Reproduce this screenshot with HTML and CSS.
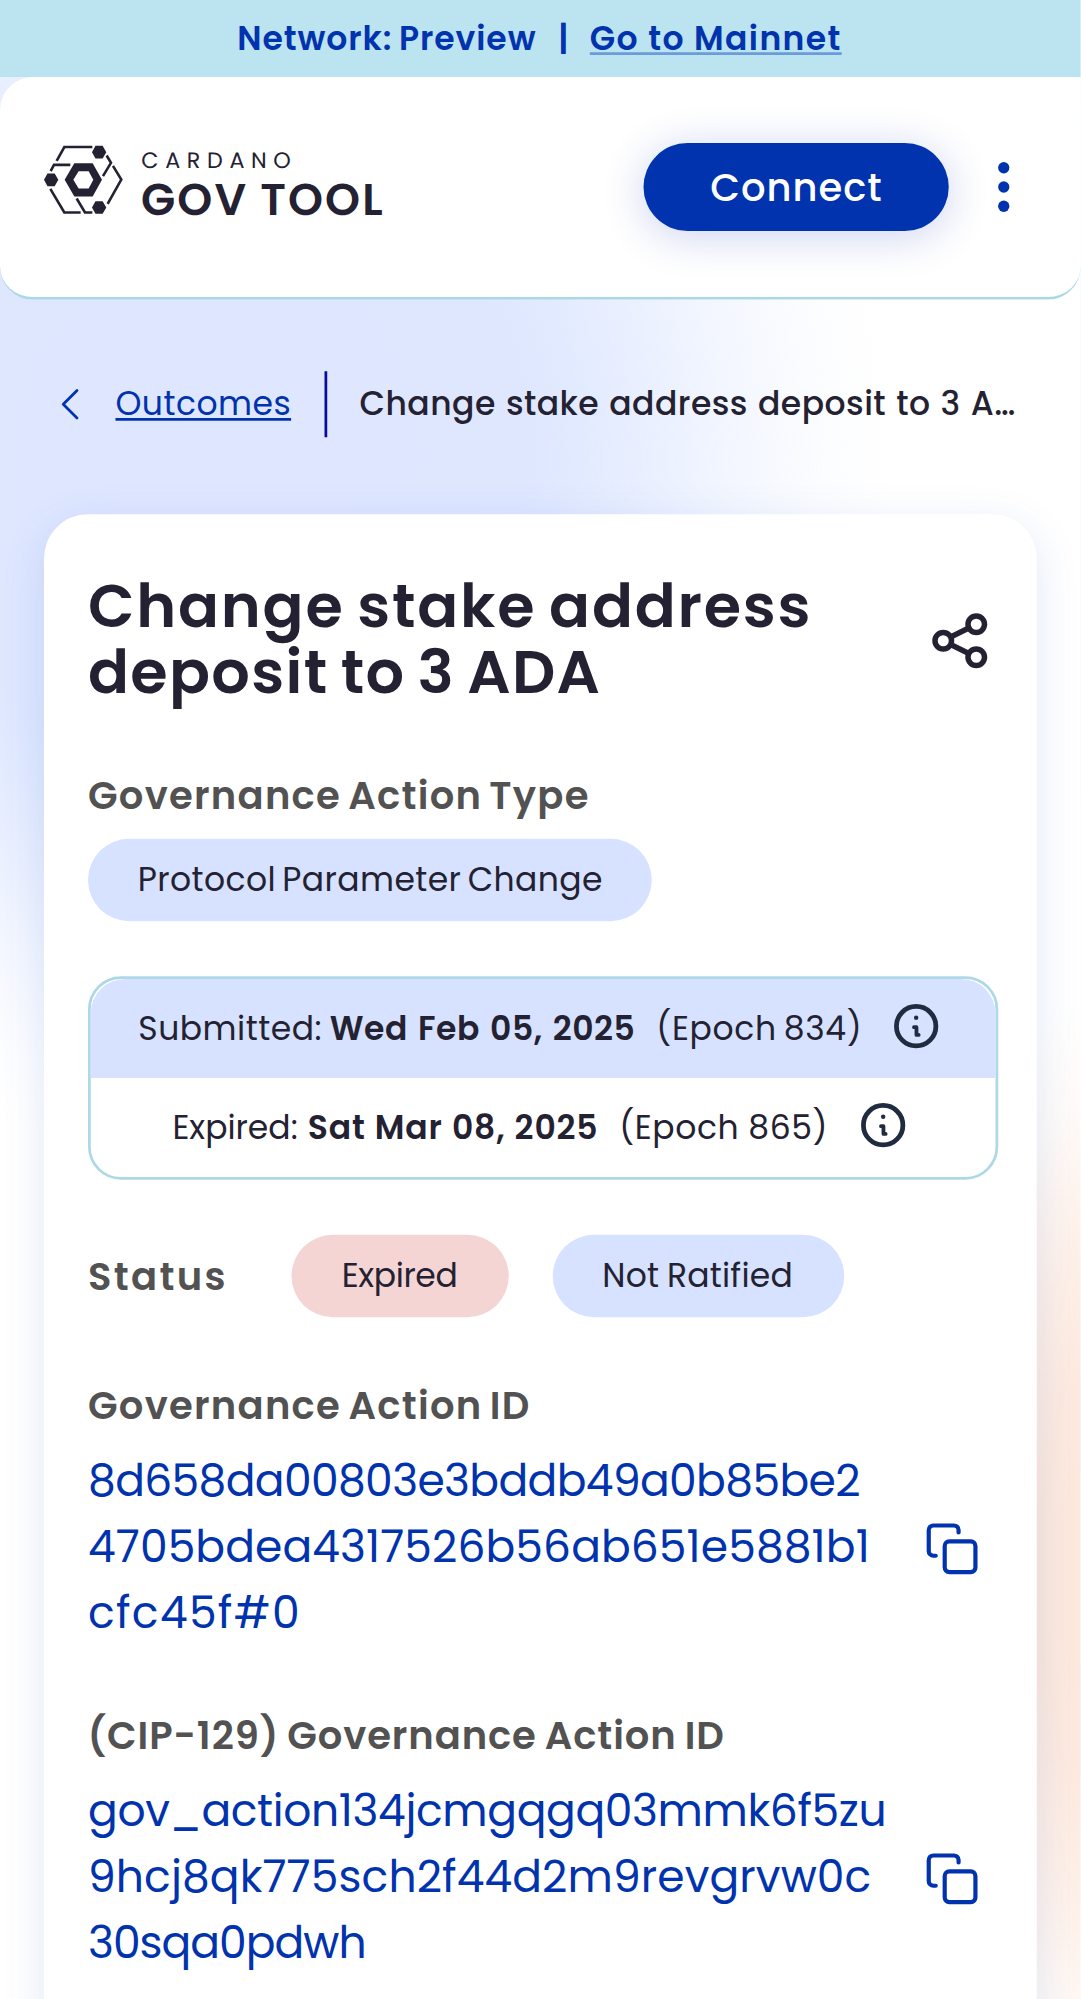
FILE: index.html
```
<!DOCTYPE html>
<html lang="en">
<head>
  <meta charset="utf-8">
  <title>Cardano GovTool</title>
  <link rel="stylesheet" href="styles.css">
</head>
<body>
<div class="page">
  <div class="banner">
    <span class="banner-network">Network: Preview</span>
    <span class="banner-sep">|</span>
    <a class="banner-link">Go to Mainnet</a>
  </div>

  <header class="header">
    <div class="logo">
      <svg class="logo-mark" viewBox="27 33 236 204" fill="none" stroke="#242232" stroke-width="7.800">
        <path d="M65 78 88 36.5H172M47 109 57 90H106M46 162 88 233H137M125 191 150 233H172M234 93 259 134 218 207M215 62 228 84 204 124"/>
        <g fill="#242232" stroke="none">
          <path d="M27 135 37.500 116H59L70 135 59 154H37.500ZM171 52 181.500 33H203L214 52 203 71H181.500ZM171 218 181.500 199H203L214 218 203 237H181.500Z"/>
          <path fill-rule="evenodd" d="M89 135 118 85H173L201 135 173 185H118ZM115 135 131 161H161L175 135 161 109H131Z"/>
        </g>
      </svg>
      <div class="logo-text">
        <span class="logo-small">CARDANO</span>
        <span class="logo-big">GOV TOOL</span>
      </div>
    </div>
    <div class="header-actions">
      <button class="connect">Connect</button>
      <svg class="menu" viewBox="0 0 24 24" fill="#0033ad">
        <circle cx="12" cy="5" r="2.050"/><circle cx="12" cy="12" r="2.050"/><circle cx="12" cy="19" r="2.050"/>
      </svg>
    </div>
  </header>

  <nav class="crumbs">
    <svg class="chevron" viewBox="0 0 7 12" fill="none" stroke="#0033ad" stroke-linecap="round" stroke-linejoin="round"><path d="M6 1 1 6 6 11"/></svg>
    <a class="crumb-link">Outcomes</a>
    <span class="crumb-rule"></span>
    <span class="crumb-title">Change stake address deposit to 3 A…</span>
  </nav>

  <main class="card">
    <div class="title-row">
      <h1 class="title"><span class="title-first">Change stake address</span> <span class="title-second">deposit to 3 ADA</span></h1>
      <svg class="share" viewBox="0 0 24 24" fill="none" stroke="#242232" stroke-width="2">
        <circle cx="18" cy="6" r="3"/><circle cx="6" cy="12" r="3"/><circle cx="18" cy="18" r="3"/>
        <path d="M8.700 10.650 15.300 7.350M8.700 13.350 15.300 16.650"/>
      </svg>
    </div>

    <h2 class="label label-type">Governance Action Type</h2>
    <div class="chip chip-type">Protocol Parameter Change</div>

    <section class="dates">
      <div class="date date-submitted">
        <span class="date-name">Submitted:</span><b>Wed Feb 05, 2025</b><span class="epoch">(Epoch 834)</span>
        <svg class="info" viewBox="0 0 45 45" fill="none" stroke="#1f2c40" stroke-linecap="round" stroke-linejoin="round">
          <circle cx="22.500" cy="22.500" r="19.800" stroke-width="4.800"/><path stroke-width="3.800" d="M20.300 23.500H22.800V31.300H25"/><circle cx="22.500" cy="14" r="2.200" fill="#1f2c40" stroke="none"/>
        </svg>
      </div>
      <div class="date date-expired">
        <span class="date-name">Expired:</span><b>Sat Mar 08, 2025</b><span class="epoch">(Epoch 865)</span>
        <svg class="info" viewBox="0 0 45 45" fill="none" stroke="#1f2c40" stroke-linecap="round" stroke-linejoin="round">
          <circle cx="22.500" cy="22.500" r="19.800" stroke-width="4.800"/><path stroke-width="3.800" d="M20.300 23.500H22.800V31.300H25"/><circle cx="22.500" cy="14" r="2.200" fill="#1f2c40" stroke="none"/>
        </svg>
      </div>
    </section>

    <div class="status-row">
      <h2 class="label label-status">Status</h2>
      <div class="chip chip-expired">Expired</div>
      <div class="chip chip-ratified">Not Ratified</div>
    </div>

    <h2 class="label label-id">Governance Action ID</h2>
    <div class="hash-row">
      <div class="hash">
        <span class="hash-a1">8d658da00803e3bddb49a0b85be2</span>
        <span class="hash-a2">4705bdea4317526b56ab651e5881b1</span>
        <span class="hash-a3">cfc45f#0</span>
      </div>
      <svg class="copy" viewBox="0 0 51 51" fill="none" stroke="#0033ad" stroke-width="4.200" stroke-linecap="round" stroke-linejoin="round">
        <rect x="18" y="18" width="30.800" height="30.800" rx="4.600"/><path d="M9 32.300H6.600A4.600 4.600 0 0 1 2 27.700V6.600A4.600 4.600 0 0 1 6.600 2H27.300A4.600 4.600 0 0 1 31.900 6.600V9"/>
      </svg>
    </div>

    <h2 class="label label-cip">(CIP-129) Governance Action ID</h2>
    <div class="hash-row">
      <div class="hash">
        <span class="hash-b1">gov_action134jcmgqgq03mmk6f5zu</span>
        <span class="hash-b2">9hcj8qk775sch2f44d2m9revgrvw0c</span>
        <span class="hash-b3">30sqa0pdwh</span>
      </div>
      <svg class="copy" viewBox="0 0 51 51" fill="none" stroke="#0033ad" stroke-width="4.200" stroke-linecap="round" stroke-linejoin="round">
        <rect x="18" y="18" width="30.800" height="30.800" rx="4.600"/><path d="M9 32.300H6.600A4.600 4.600 0 0 1 2 27.700V6.600A4.600 4.600 0 0 1 6.600 2H27.300A4.600 4.600 0 0 1 31.900 6.600V9"/>
      </svg>
    </div>
  </main>
</div>
</body>
</html>
```
FILE: styles.css
```
* { box-sizing: border-box; }

html, body { height: 100%; overflow: hidden; }

body {
  margin: 0;
  color: #242232;
  font: 400 12px/18px Poppins, Inter, sans-serif;
}

h1, h2 { margin: 0; }
span, a, b { white-space: nowrap; }
svg { flex: none; display: block; overflow: visible; }

/* phone layout, 393 wide, shown at 2.75x */
.page {
  display: flex;
  flex-direction: column;
  width: 393.1px;
  height: 727px;
  overflow: hidden;
  transform: scale(2.75);
  transform-origin: 0 0;
  background:
    radial-gradient(ellipse 124px 225px at 433px 573px, #fde6d9 0%, #fde9de 45%, rgba(254, 235, 224, 0.65) 66%, rgba(254, 236, 225, 0.22) 83%, rgba(255, 240, 232, 0) 100%),
    radial-gradient(ellipse 244px 252px at 80px 167px, #dfe6ff 0%, #dfe7ff 46%, rgba(223, 232, 255, 0.9) 54%, rgba(223, 232, 255, 0.68) 64%, rgba(223, 232, 255, 0.38) 76%, rgba(223, 232, 255, 0.1) 90%, rgba(223, 232, 255, 0) 100%),
    #fff;
}

/* network banner */
.banner {
  display: flex;
  align-items: center;
  flex: none;
  height: 28px;
  padding-left: 86.3px;
  background: #bbe3f0;
  color: #0033ad;
  font-weight: 600;
}
.banner-network { width: 109px; letter-spacing: 0.34px; word-spacing: -0.8px; }
.banner-sep { width: 19.2px; text-align: center; }
.banner-link {
  letter-spacing: 0.5px;
  text-decoration: underline #6c9bd9 1px;
  text-underline-offset: 1px;
  text-decoration-skip-ink: none;
}

/* header */
.header {
  display: flex;
  align-items: center;
  justify-content: space-between;
  flex: none;
  height: 81px;
  padding: 0 16px;
  border-bottom: 1px solid #a9d9e6;
  border-radius: 12px;
  background: #fff;
}
.logo { display: flex; gap: 6.8px; height: 30px; text-rendering: geometricPrecision; }
.logo-mark { width: 28.6px; height: 24.8px; }
.logo-text { display: flex; flex-direction: column; gap: 3px; padding-top: 0.7px; }
.logo-small { font-size: 8.1px; font-weight: 400; line-height: 8px; letter-spacing: 2.42px; }
.logo-big { font-size: 16.2px; font-weight: 600; line-height: 16px; letter-spacing: 0.77px; word-spacing: -0.26px; margin-left: -0.1px; }
.header-actions { display: flex; align-items: center; gap: 8px; }
.connect {
  width: 111px;
  height: 32px;
  padding: 0;
  border: 0;
  border-radius: 16px;
  background: #0033ad;
  box-shadow: 0 2px 15px rgba(47, 70, 190, 0.24);
  color: #fff;
  font: 500 14px/32px Poppins, Inter, sans-serif;
  letter-spacing: 0.36px;
}
.menu { width: 24px; height: 24px; }

/* breadcrumbs */
.crumbs {
  display: flex;
  align-items: center;
  flex: none;
  height: 24px;
  margin: 26px 0 28px;
  padding-left: 22.300px;
}
.chevron { width: 7px; height: 12px; }
.crumb-link {
  width: 64px;
  margin-left: 12.700px;
  color: #0033ad;
  letter-spacing: 0.17px;
  text-decoration: underline 1px;
  text-underline-offset: 1px;
}
.crumb-rule { width: 1px; height: 24px; margin-left: 12px; background: #0a0aa0; }
.crumb-title { margin-left: 11.75px; font-weight: 500; letter-spacing: 0.168px; word-spacing: 0.4px; }

/* card */
.card {
  flex: 1 0 auto;
  margin: 0 16px;
  padding: 21.2px 14px 40px 16px;
  border-radius: 16px;
  background: #fff;
  box-shadow: 0 4px 15px rgba(47, 98, 200, 0.15);
}
.title-row { display: flex; align-items: center; justify-content: space-between; }
.title { width: 290px; padding-top: 0.9px; font-size: 22px; font-weight: 600; line-height: 24px; }
.title span { display: block; }
.title-first { letter-spacing: 0.647px; word-spacing: -1.23px; }
.title-second { letter-spacing: 0.48px; word-spacing: -1.29px; }
.share { width: 24px; height: 24px; margin: 1.1px 2px 0 0; }

.label { color: #525252; font-size: 14px; font-weight: 600; line-height: 21px; white-space: nowrap; }
.label-type { margin: 21.6px 0 0; letter-spacing: 0.46px; word-spacing: -1.2px; }
.label-status { width: 74px; padding-top: 1.8px; letter-spacing: 0.85px; }
.label-id { margin: 22.3px 0 0; letter-spacing: 0.46px; word-spacing: -1.1px; }
.label-cip { margin: 22.2px 0 0 -0.2px; letter-spacing: 0.33px; word-spacing: -0.75px; }

.chip {
  height: 30px;
  padding-left: 18px;
  border-radius: 15px;
  background: #d6e2ff;
  line-height: 30px;
  white-space: nowrap;
}
.chip-type { width: 205px; margin-top: 5.3px; padding-left: 18.1px; letter-spacing: 0.15px; word-spacing: -1.05px; }
.chip-expired { width: 79px; margin-right: 16px; padding-left: 18.300px; background: #f5d5d4; letter-spacing: -0.143px; }
.chip-ratified { width: 106px; letter-spacing: 0.073px; word-spacing: -0.42px; }

/* dates */
.dates {
  width: 331px;
  margin-top: 20px;
  border: 1px solid #add8e6;
  border-radius: 12px;
}
.date { display: flex; align-items: center; height: 36px; }
.date b { font-weight: 600; }
.date-submitted { padding-left: 17.3px; border-radius: 12.5px 12.5px 0 0; background: #d6e2ff; }
.date-expired { padding-left: 29.7px; }
.info { width: 16.300px; height: 16.300px; margin: 0 0 2.600px 11.800px; }
.date-submitted .date-name { letter-spacing: 0.18px; }
.date-submitted b { margin-left: 2.8px; letter-spacing: 0.2px; word-spacing: 0.63px; }
.date-submitted .epoch { margin-left: 7.6px; letter-spacing: 0.242px; word-spacing: -0.92px; }
.date-expired b { margin-left: 3.7px; letter-spacing: 0.303px; word-spacing: 0.2px; }
.date-expired .epoch { margin-left: 7.6px; letter-spacing: 0.206px; word-spacing: -0.1px; }

.status-row { display: flex; align-items: center; margin-top: 20px; }

/* identifiers */
.hash-row { display: flex; align-items: center; justify-content: space-between; margin-top: 4.8px; }
.hash { display: flex; flex-direction: column; color: #0033ad; font-size: 16px; line-height: 24px; }
.hash-a1 { letter-spacing: -0.227px; }
.hash-a2 { letter-spacing: 0.036px; }
.hash-a3 { letter-spacing: 0.483px; }
.hash-b1 { letter-spacing: -0.132px; }
.hash-b2 { letter-spacing: 0.041px; }
.hash-b3 { letter-spacing: -0.356px; }
.copy { width: 18.500px; height: 18.500px; margin: -0.600px 8.100px 0 0; }
```
